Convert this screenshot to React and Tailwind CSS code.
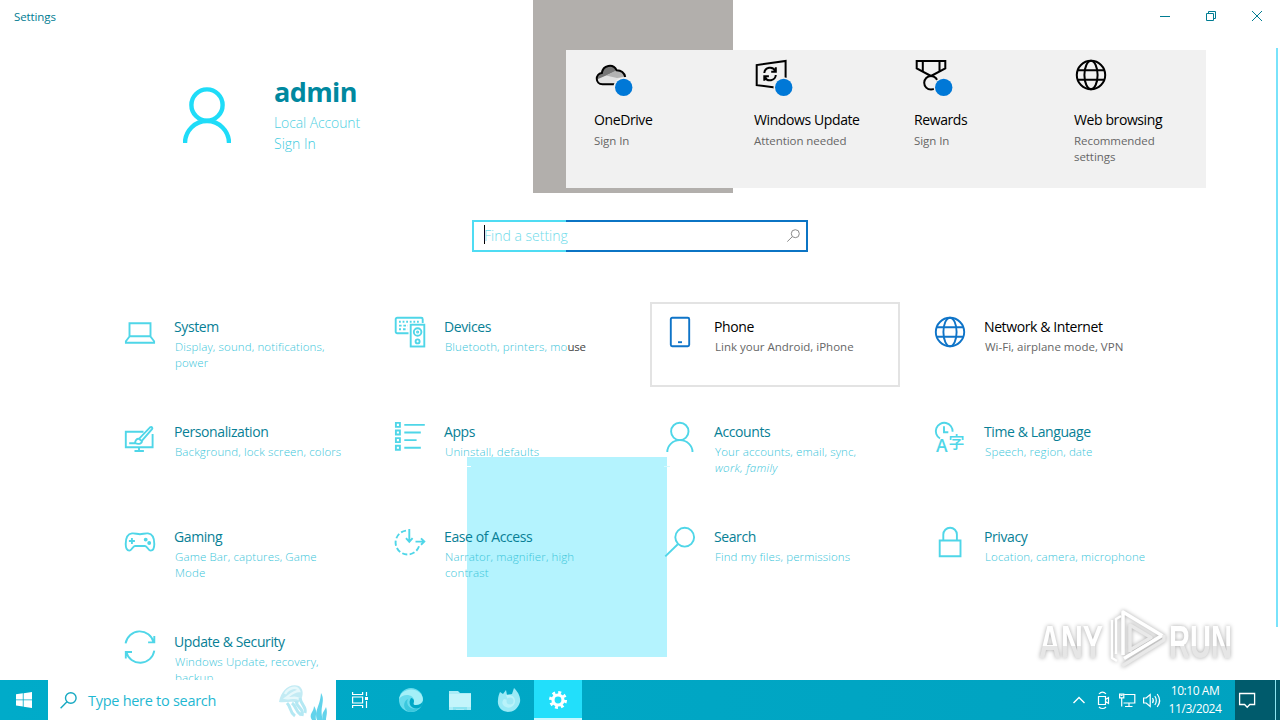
import React from 'react';

// --- ICONS ---
const Icon = ({ children, size = 30, className = '', strokeWidth = 1.5 }) => (
  <svg
    width={size}
    height={size}
    viewBox={`0 0 ${size} ${size}`}
    fill="none"
    stroke="currentColor"
    strokeWidth={strokeWidth}
    className={`shrink-0 overflow-visible ${className}`}
  >
    {children}
  </svg>
);

const GlobeShape = () => (
  <>
    <circle cx="15" cy="15" r="14.2" />
    <ellipse cx="15" cy="15" rx="6.6" ry="14.2" />
    <path d="M1.6 10.2h26.8M1.6 19.8h26.8" />
  </>
);

const icons = {
  system: <path d="M4.5 6.2h21v13h-21zM4.5 19.5L.9 24.2v1.6h28.2v-1.6l-3.6-4.7" />,
  devices: (
    <>
      <path d="M13.5 16.2H2.2A1.5 1.5 0 0 1 .7 14.7V2.2A1.5 1.5 0 0 1 2.2.7h24a1.5 1.5 0 0 1 1.5 1.5V6" />
      <path d="M4 4.8h21" strokeDasharray="1.8 1.8" />
      <path d="M4 8.6h9M4 12.2h2M8 12.2h4.5" strokeDasharray="2.6 1.8" />
      <rect x="15.7" y="7.7" width="13.6" height="21.8" />
      <circle cx="22.6" cy="15" r="3.8" />
      <circle cx="22.6" cy="15" r=".6" />
      <circle cx="22.6" cy="24.4" r="2" />
    </>
  ),
  phone: (
    <>
      <rect x="5.8" y=".8" width="18.4" height="28.4" rx="1.4" />
      <path d="M13 25.2h4" />
    </>
  ),
  network: <GlobeShape />,
  personalization: (
    <>
      <path d="M18.5 9.8H.8v15.4h26.8V12M14 25.2v3.6M9.5 29h9.4M4.2 21.3h6" />
      <path d="M10 21.2c.2-3 1.6-4.6 4-4.4L25 5.4c1.8-1.2 3 .3 2 1.8L17 18.6c.2 2.9-3 4.2-7 2.6zM14 16.8l3 2.6" />
    </>
  ),
  apps: (
    <>
      <path d="M.9.9h4v4h-4zM.9 8.5h4v4h-4zM.9 16.1h4v4h-4zM.9 23.7h4v4h-4z" />
      <path d="M9.3 2.9h20.5M9.3 10.5h16.5M9.3 18.1h12.3M9.3 25.7h16.5" />
    </>
  ),
  accounts: (
    <>
      <circle cx="14.8" cy="9.4" r="8.7" />
      <path d="M2.3 30a12.6 11.9 0 0 1 25.2 0" />
    </>
  ),
  time: (
    <>
      <path d="M5 16.5A8.4 8.4 0 1 1 17.6 9.8M9 4.3v6h4.3" />
      <text x="1" y="30" fontSize="17.5" fill="currentColor" stroke="none" fontFamily="Open Sans, sans-serif" fontWeight="600">A</text>
      <text x="13.6" y="25.6" fontSize="16" fill="currentColor" stroke="none" fontFamily="Noto Sans CJK JP, sans-serif" fontWeight="500">字</text>
    </>
  ),
  gaming: (
    <>
      <path d="M7 6.4C10 6 12 7.2 15 7.2s5-1.2 8-.8c4.2.5 6.3 4.6 6.3 10.6 0 4-1.2 6.6-3.6 6.6-2.6 0-3.3-4.6-5.7-4.6H10c-2.4 0-3.1 4.6-5.7 4.6C1.9 23.6.7 21 .7 17 .7 11 2.8 6.9 7 6.4z" />
      <path d="M3.9 14h6M6.9 11v6" />
      <circle cx="20.7" cy="12.6" r="1" fill="currentColor" />
      <circle cx="24.2" cy="16" r="1" fill="currentColor" />
    </>
  ),
  ease: (
    <>
      <path d="M11 3.6A12 12 0 1 0 24.5 17" strokeDasharray="5.2 2.4" />
      <path d="M14.3 2v12.5M11 11.2l3.3 3.6 3.3-3.6M20.5 14.6h8.5M26 11.4l3.3 3.2-3.3 3.2" />
    </>
  ),
  search: (
    <>
      <circle cx="19.7" cy="10.2" r="9.4" />
      <path d="M12.8 17.2L.3 29.4" />
    </>
  ),
  privacy: <path d="M4.7 13.5h20.8v15.8H4.7zM8.3 13.5V7.6a6.8 6.8 0 0 1 13.6 0v5.9" />,
  update: (
    <>
      <path d="M.6 11.3a14.3 14.3 0 0 1 28-1M29.3 4v6.4h-6.2" />
      <path d="M29.3 18.7a14.3 14.3 0 0 1-28 1.2M.8 26.5V20H7" />
    </>
  ),
};

// Small round badge shown on the header shortcuts
const Dot = () => (
  <>
    <circle cx="29.7" cy="29.4" r="10.2" fill="#f1f1f1" stroke="none" />
    <circle cx="29.7" cy="29.4" r="8.7" fill="#0078d7" stroke="none" />
  </>
);

const shortcuts = [
  {
    title: 'OneDrive',
    lines: ['Sign In'],
    icon: (
      <>
        <path d="M8 26.2C1 26.2 1 16 7.8 15 9 7 19 5 22.6 12.2c4 0 7.6 2.2 8.6 6.8l-3 7.2z" fill="#e3e3e3" stroke="none" />
        <path d="M4 21L22 13.2C19 5 9.5 7 7.8 15 4 16 3 18 4 21z" fill="#767676" stroke="none" />
        <path d="M12 17.5l10-5c4 0 8 2.5 9 6.5l-8 1z" fill="#b3b3b3" stroke="none" />
        <path d="M22 26.2H8.5C1 26.2 1 16 7.8 15 9 7 19 5 22.6 12.2c4 0 7.6 2.2 8.6 6.8" />
        <Dot />
      </>
    ),
  },
  {
    title: 'Windows Update',
    lines: ['Attention needed'],
    icon: (
      <>
        <path d="M31.6 24V2.9L2.7 7v20.2l22 2.7" />
        <path d="M10.3 15a5.8 5.8 0 0 1 11-2M21.8 9.3v4.5h-4.6M21.8 17a5.8 5.8 0 0 1-11 2M10.3 22.7v-4.5h4.6" />
        <Dot />
      </>
    ),
  },
  {
    title: 'Rewards',
    lines: ['Sign In'],
    icon: (
      <>
        <path d="M2.7 2.9h28.6v7.6L17 18 2.7 10.5zM8.8 3v10.2M25.5 3v10.2" />
        <circle cx="17" cy="24.8" r="6.8" />
        <Dot />
      </>
    ),
  },
  {
    title: 'Web browsing',
    lines: ['Recommended', 'settings'],
    icon: (
      <g transform="translate(2 2)">
        <GlobeShape />
      </g>
    ),
  },
];

const tiles = [
  { id: 'system', title: 'System', lines: ['Display, sound, notifications,', 'power'] },
  { id: 'devices', title: 'Devices', lines: [<>Bluetooth, printers, mo<span className="font-normal tracking-[-0.2px] text-[#444]">use</span></>] },
  { id: 'phone', title: 'Phone', lines: ['Link your Android, iPhone'], solid: true, hovered: true },
  { id: 'network', title: 'Network & Internet', lines: ['Wi-Fi, airplane mode, VPN'], solid: true },
  { id: 'personalization', title: 'Personalization', lines: ['Background, lock screen, colors'] },
  { id: 'apps', title: 'Apps', lines: ['Uninstall, defaults'] },
  { id: 'accounts', title: 'Accounts', lines: ['Your accounts, email, sync,', <i className="tracking-[0.3px]">work, family</i>] },
  { id: 'time', title: 'Time & Language', lines: ['Speech, region, date'] },
  { id: 'gaming', title: 'Gaming', lines: ['Game Bar, captures, Game', 'Mode'] },
  { id: 'ease', title: 'Ease of Access', lines: ['Narrator, magnifier, high', 'contrast'] },
  { id: 'search', title: 'Search', lines: ['Find my files, permissions'] },
  { id: 'privacy', title: 'Privacy', lines: ['Location, camera, microphone'] },
  { id: 'update', title: 'Update & Security', lines: ['Windows Update, recovery,', 'backup'] },
];

const TitleBar = () => (
  <div className="flex h-8 shrink-0 items-center text-[#007c92]">
    <span className="pt-0.5 pl-3.5 text-[11.5px] tracking-[-0.1px]">Settings</span>
    <div className="ml-auto flex">
      <button className="flex h-8 w-[46px] items-center justify-center">
        <Icon size={10} strokeWidth={1}><path d="M0 5.5h10" /></Icon>
      </button>
      <button className="flex h-8 w-[46px] items-center justify-center">
        <Icon size={10} strokeWidth={1}><path d="M.5 2.5h7v7h-7zM2.5 2.5v-2h7v7h-2" /></Icon>
      </button>
      <button className="flex h-8 w-[46px] items-center justify-center">
        <Icon size={10} strokeWidth={1}><path d="M0 0l10 10M10 0L0 10" /></Icon>
      </button>
    </div>
  </div>
);

const Header = () => (
  <div className="mt-[18px] flex h-[138px] shrink-0">
    <div className="flex w-[566px] pl-[183px]">
      <svg width="48" height="58" viewBox="0 0 48 58" fill="none" stroke="#1fdcf8" strokeWidth="4.4" className="mt-[36px] shrink-0">
        <circle cx="24" cy="19" r="15.6" />
        <path d="M2 57a22 22 0 0 1 44 0" />
      </svg>
      <div className="ml-[43px] pt-[24px]">
        <div className="text-[27px] leading-[36px] font-bold tracking-[-0.6px] text-[#00889f]">admin</div>
        <div className="mt-[2px] text-sm leading-[21px] tracking-[-0.1px] font-light text-[#4fcfe2]">Local Account</div>
        <div className="text-sm leading-[21px] font-light text-[#40cbe0]">Sign In</div>
      </div>
    </div>
    <div className="grid w-[640px] grid-cols-4 bg-[#f1f1f1]">
      {shortcuts.map(item => (
        <div key={item.title} className="pt-2 pl-7">
          <Icon size={40} strokeWidth={2} className="text-black">{item.icon}</Icon>
          <div className="mt-[12px] text-sm leading-5 tracking-[-0.4px] whitespace-nowrap text-black">{item.title}</div>
          <div className="mt-[3px] text-[11.5px] leading-4 tracking-[-0.06px] text-[#666]">
            {item.lines.map(line => <div key={line} className="whitespace-nowrap">{line}</div>)}
          </div>
        </div>
      ))}
    </div>
  </div>
);

const SearchBox = () => (
  <div className="mt-8 ml-[472px] h-8 w-[336px] shrink-0 bg-[linear-gradient(90deg,#4fdcf3_94px,#0b74c4_94px)] p-0.5">
    <div className="flex h-full items-start bg-white pt-[3px] pr-[6px] pl-[10px]">
      <span className="h-[19px] w-px bg-black" />
      <span className="-ml-px pt-px text-sm leading-5 font-light text-[#6fdbea]">Find a setting</span>
      <Icon size={13} strokeWidth={1} className="mt-1 ml-auto text-[#8a8a8a]">
        <circle cx="8.3" cy="4.7" r="4" />
        <path d="M5.4 7.6L.3 12.6" />
      </Icon>
    </div>
  </div>
);

const Tile = ({ tile }) => (
  <div className={`flex h-[85px] border-2 pt-[13px] pl-[13px] ${tile.hovered ? 'border-[#e3e3e3]' : 'border-transparent'}`}>
    <Icon className={tile.solid ? 'text-[#0f74c8]' : 'text-[#4fd6e8]'} strokeWidth={1.9}>{icons[tile.id]}</Icon>
    <div className="ml-[19px] whitespace-nowrap">
      <div className={`text-sm leading-5 tracking-[-0.4px] ${tile.solid ? 'text-black' : 'text-[#087f96]'}`}>{tile.title}</div>
      <div className={`ml-px pt-[2px] text-[11.5px] leading-4 ${tile.solid ? 'text-[#666]' : 'font-light tracking-[0.13px] text-[#3cc6da]'}`}>
        {tile.lines.map((line, i) => <div key={i}>{line}</div>)}
      </div>
    </div>
  </div>
);

const Watermark = () => (
  <svg width="214" height="76" viewBox="0 0 214 76" className="absolute top-[602px] left-[1030px] [filter:drop-shadow(0_0_2px_#a8a8a8)]">
    <defs>
      <linearGradient id="wm" x1="0" y1="0" x2="0" y2="1">
        <stop offset=".58" stopColor="#fff" />
        <stop offset=".58" stopColor="#e6e6e6" />
      </linearGradient>
    </defs>
    <g fill="url(#wm)" fontFamily="Liberation Sans, sans-serif" fontSize="46" fontWeight="bold">
      <text x="9" y="56" textLength="64" lengthAdjust="spacingAndGlyphs">ANY</text>
      <text x="139" y="56" textLength="63" lengthAdjust="spacingAndGlyphs">RUN</text>
    </g>
    <g fill="none" stroke="#fff" strokeWidth="3.5" strokeLinejoin="round">
      <path d="M86 52V17l5-3M82 18v38l5 3" strokeWidth="2.5" />
      <path d="M93 53V10l39 23.5-38 23" />
      <path d="M100 50V23l21 12.5-21 12.5M92 64l42-26v-5" stroke="#e9e9e9" />
    </g>
  </svg>
);

const Jellyfish = () => (
  <svg width="52" height="38" viewBox="0 0 52 38" className="mr-[7px] ml-auto self-end">
    <path d="M2 20C4 9 12 1 22 4c6 4 4 13-1 17-6-3-12 0-19-1z" fill="#c3ebf4" />
    <path d="M8 12c4-7 12-8 14-3-5 0-9 4-13 7 6 1 9-2 13 1" fill="none" stroke="#e6f8fb" strokeWidth="2.5" />
    <path d="M10 21c5 5 2 9 8 13M15 21c5 4 3 8 9 12M19 19c1 8 8 6 6 15M23 16c1 7 7 9 5 15" fill="none" stroke="#b4e8f3" strokeWidth="3" />
    <path d="M35 38c-4-6 2-8 2-14 4 6 1 9 2 14zM40 38c-3-10 3-13 4-27 5 8-2 14 2 27zM46 38c-2-7 1-8 3-13 2 6 0 9 0 13z" fill="#62d3eb" />
  </svg>
);

const Taskbar = () => (
  <div className="flex h-10 shrink-0 bg-linear-to-r from-[#00abc9] to-[#00a2c0] text-white">
    <div className="flex w-12 items-center justify-center">
      <svg width="16" height="16" viewBox="0 0 16 16" fill="white">
        <path d="M0 2.3l6.8-1v6.2H0zM7.6 1.2L16 0v7.5H7.6zM0 8.3h6.8v6.2l-6.8-1zM7.6 8.3H16V16l-8.4-1.2z" />
      </svg>
    </div>
    <div className="flex w-[288px] items-center bg-white pl-3">
      <Icon size={17} strokeWidth={1.4} className="text-[#16a9c2]">
        <circle cx="10.8" cy="6" r="5.3" />
        <path d="M7 9.8L.6 16.2" />
      </Icon>
      <span className="ml-[11px] pt-0.5 text-[14.5px] tracking-[-0.28px] whitespace-nowrap text-[#1fb8d2]">Type here to search</span>
      <Jellyfish />
    </div>
    <div className="flex w-12 items-center justify-center">
      <Icon size={16} strokeWidth={1.2}>
        <path d="M.6 0v2.5h10V0M.6 5h10v6H.6zM.6 16v-2.5h10V16M14.5 0v4M14.5 9v7" />
        <path d="M13 5h3v3h-3z" fill="currentColor" stroke="none" />
      </Icon>
    </div>
    <div className="ml-[3px] flex w-12 items-center justify-center">
      <svg width="24" height="24" viewBox="0 0 24 24">
        <circle cx="12" cy="12" r="12" fill="#69dced" />
        <path d="M0 11C2 1 15-2 22 6c4 6 1 11-5 11-4 0-2-2-2-4 0-7-11-8-15-2z" fill="#a4f0f8" />
        <path d="M9 11c-3 6 3 12 11 9-2 3-6 4-9 4C3 22 4 13 9 11z" fill="#3bc8de" />
        <path d="M15 13c0 2-2 4 2 4 4 0 6-2 7-4 0 4-2 6-4 7-7 2-12-4-8-10 1 0 3 1 3 3z" fill="#00a9c7" />
      </svg>
    </div>
    <div className="ml-px flex w-12 items-center justify-center">
      <svg width="22" height="19" viewBox="0 0 22 19">
        <path d="M0 0h9l2 2h11v17H0z" fill="#a9edf7" />
        <path d="M0 3h22v13H0z" fill="#c3f5fb" />
        <path d="M4 19v-3h14v3h-3v-1H7v1z" fill="#8be4f1" />
      </svg>
    </div>
    <div className="ml-px flex w-12 items-center justify-center">
      <svg width="24" height="24" viewBox="0 0 24 24">
        <path d="M3 4l3 2 3-4 1 5 5-1 2-6c3 3 7 8 6 14-2 7-7 10-12 10C4 23.5 0 18 1 12c0-3 1-6 2-8z" fill="#9aeaf6" />
        <path d="M9 7c4-1 9 1 9 6s-5 8-9 6c-5-2-4-6-2-8l4 1z" fill="#b9f3fa" />
        <circle cx="13" cy="13" r="3.5" fill="#9fe9f5" />
      </svg>
    </div>
    <div className="ml-px flex w-12 flex-col bg-[#22dffb]">
      <div className="flex flex-1 items-center justify-center pt-0.5">
        <svg width="18" height="18" viewBox="0 0 18 18" fill="none" stroke="white">
          <circle cx="9" cy="9" r="5" strokeWidth="3.2" />
          <circle cx="9" cy="9" r="7.5" strokeWidth="3" strokeDasharray="2.9 2.99" />
        </svg>
      </div>
      <div className="h-0.5 bg-[#c5f8ff]" />
    </div>
    <div className="ml-auto flex items-center">
      <Icon size={12} strokeWidth={1.4}><path d="M.5 9L6 3.5 11.5 9" /></Icon>
      <Icon size={16} strokeWidth={1.2} className="ml-[11px]">
        <path d="M2.5 4.5h7v8h-7zM9.5 7.5l3-2v6l-3-2M3 2c2-2.5 5-2.5 7 0M3 15c2 2 5 2 7 0" />
      </Icon>
      <Icon size={16} strokeWidth={1.2} className="ml-[7px]">
        <path d="M5.5 2.5h10.3v8.5H4.5M10 11v3.5M6 14.5h7.5M.6 2.2h4.2v3.6H.6zM2.7 6v8.5M1.6 3.5h2" />
      </Icon>
      <Icon size={17} strokeWidth={1.2} className="ml-[8px]">
        <path d="M.6 6h2.6l4-3.5v12L3.2 11H.6zM9.5 6c1 1.5 1 3.5 0 5M11.8 4c2 2.5 2 6.5 0 9M14.2 2c3 4 3 9 0 13" />
      </Icon>
      <div className="w-[70px] text-center text-[12px] leading-[18px] tracking-[-0.45px]">
        <div>10:10 AM</div>
        <div>11/3/2024</div>
      </div>
      <div className="ml-[5px] flex h-10 w-10 items-center bg-[#005b6c] pl-1">
        <Icon size={16} strokeWidth={1.3}><path d="M.6 1.5h15v11h-4.8L8.2 15.2l-2.6-2.7h-5z" /></Icon>
      </div>
      <div className="h-10 w-[5px] border-l border-[#8ce5f1] bg-[#005b6c]" />
    </div>
  </div>
);

const App = () => {
  return (
    <div className="relative isolate flex h-[720px] w-[1280px] flex-col overflow-hidden bg-white font-['Open_Sans','Noto_Sans',sans-serif]">
      {/* Blocks left behind the window content */}
      <div className="absolute top-0 left-[533px] -z-10 h-[193px] w-[200px] bg-[#b2afac]" />
      <div className="absolute top-[457px] left-[467px] -z-10 h-[200px] w-[200px] bg-[#b4f3fe]" />
      <div className="absolute top-[466px] left-[467px] -z-10 h-px w-1 bg-white" />
      <div className="absolute top-[466px] left-[664px] -z-10 h-px w-1.5 bg-[#d6f9fe]" />

      <TitleBar />
      <main className="flex h-[648px] flex-col overflow-hidden">
        <Header />
        <SearchBox />
        <div className="mt-[50px] ml-[110px] grid w-[1060px] shrink-0 grid-cols-4 gap-5">
          {tiles.map(tile => <Tile key={tile.id} tile={tile} />)}
        </div>
      </main>
      <Taskbar />

      {/* Scrollbar thumb */}
      <div className="absolute top-12 left-[1276px] h-[579px] w-0.5 bg-[#79e3fb]" />
      <Watermark />
    </div>
  );
};

export default App;
